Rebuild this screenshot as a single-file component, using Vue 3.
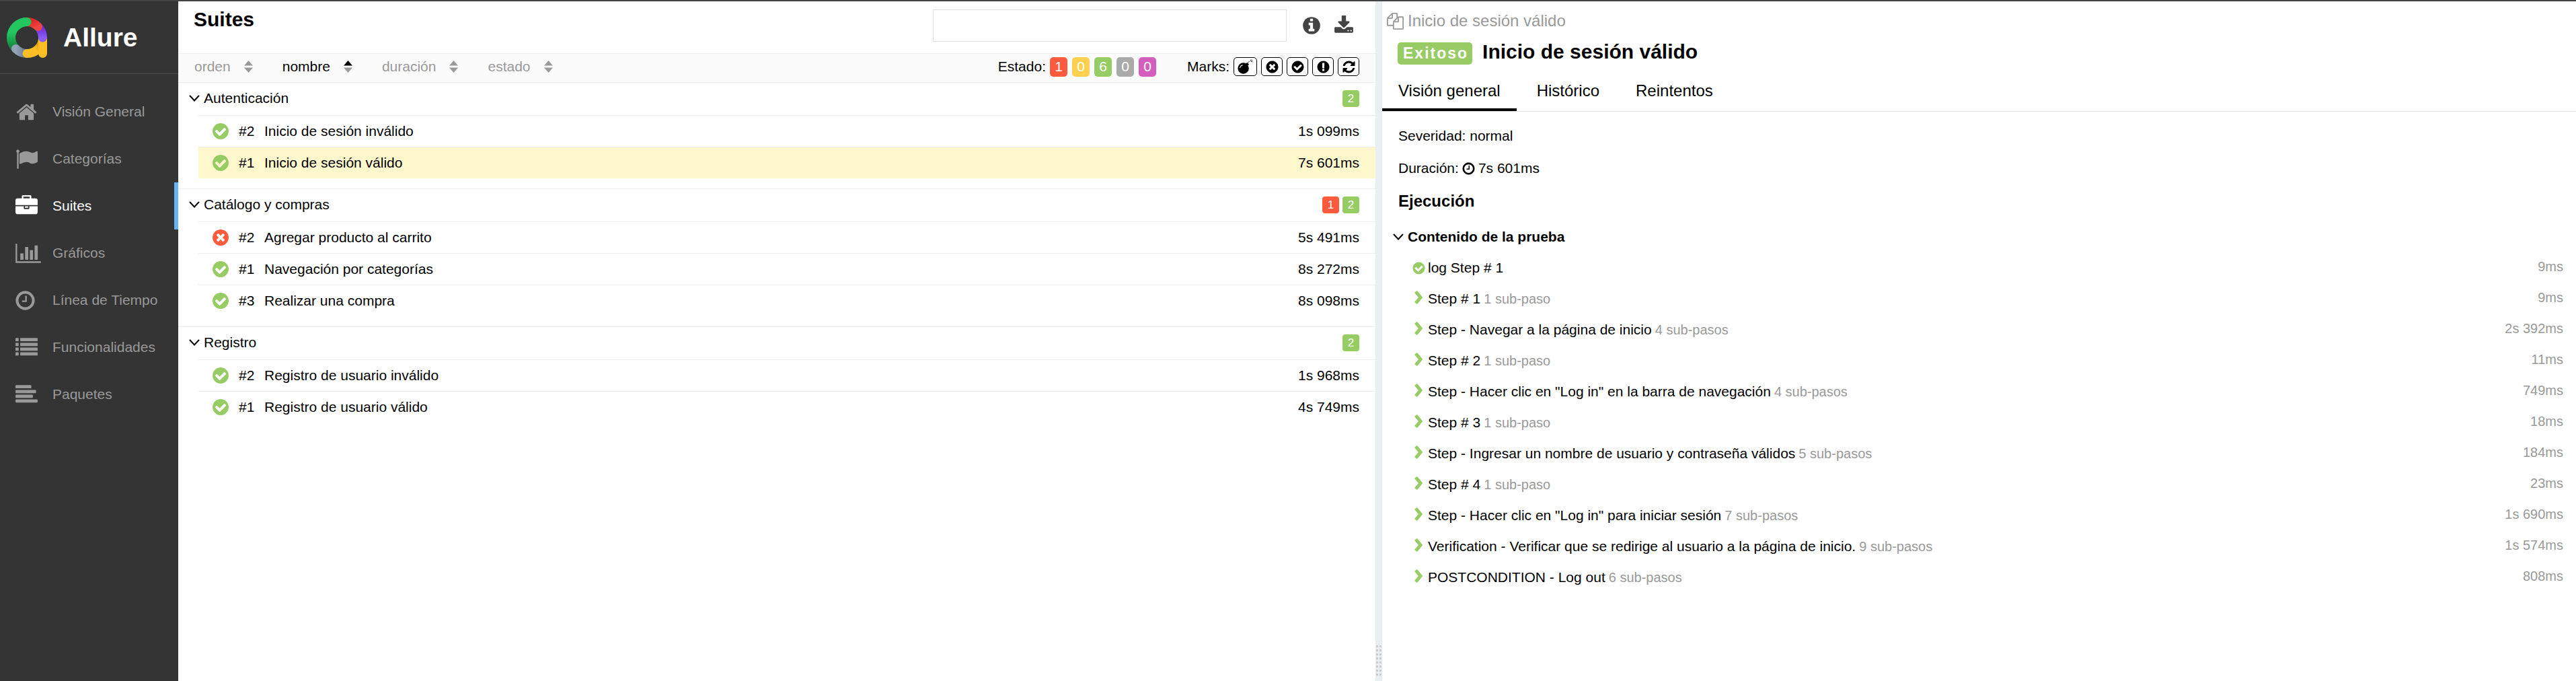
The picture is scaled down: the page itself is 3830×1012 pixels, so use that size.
<script setup>
import { h } from 'vue'

const disc = 'q0 209-103 385.5t-279.5 279.5-385.5 103-385.5-103-279.5-279.5-103-385.5 103-385.5 279.5-279.5 385.5-103 385.5 103 279.5 279.5 103 385.5z'
const glyphs = {
  home: 'M1472 992v480q0 26-19 45t-45 19h-384v-384h-256v384h-384q-26 0-45-19t-19-45v-480q0-1 .5-3t.5-3l575-474 575 474q1 2 1 6zm223-69l-62 74q-8 9-21 11h-3q-13 0-21-7l-692-577-692 577q-12 8-24 7-13-2-21-11l-62-74q-8-10-7-23.5t11-21.5l719-599q32-26 76-26t76 26l244 204v-195q0-14 9-23t23-9h192q14 0 23 9t9 23v408l219 182q10 8 11 21.5t-7 23.5z',
  flag: 'M320 256q0 72-64 110v1266q0 13-9.5 22.5t-22.5 9.5h-64q-13 0-22.5-9.5t-9.5-22.5v-1266q-64-38-64-110 0-53 37.5-90.5t90.5-37.5 90.5 37.5 37.5 90.5zm1472 64v763q0 25-12.5 38.5t-39.5 27.5q-215 116-369 116-61 0-123.5-22t-108.5-48-115.5-48-142.5-22q-192 0-464 146-17 9-33 9-26 0-45-19t-19-45v-742q0-32 31-55 21-14 79-43 236-120 421-120 107 0 200 29t219 88q38 19 88 19 54 0 117.5-21t110-47 88-47 54.5-21q26 0 45 19t19 45z',
  briefcase: 'M640 256h512v-128h-512v128zm1152 640v480q0 66-47 113t-113 47h-1472q-66 0-113-47t-47-113v-480h672v160q0 26 19 45t45 19h320q26 0 45-19t19-45v-160h672zm-768 0v128h-256v-128h256zm768-480v384h-1792v-384q0-66 47-113t113-47h352v-160q0-40 28-68t68-28h576q40 0 68 28t28 68v160h352q66 0 113 47t47 113z',
  chart: 'M640 896v512h-256v-512h256zm384-512v1024h-256v-1024h256zm1024 1152v128h-2048v-1536h128v1408h1920zm-640-896v768h-256v-768h256zm384-384v1152h-256v-1152h256z',
  clock: 'M1024 544v448q0 14-9 23t-23 9h-320q-14 0-23-9t-9-23v-64q0-14 9-23t23-9h224v-352q0-14 9-23t23-9h64q14 0 23 9t9 23zm416 352q0-148-73-273t-198-198-273-73-273 73-198 198-73 273 73 273 198 198 273 73 273-73 198-198 73-273zm224 0' + disc,
  list: 'M30 1280h196q30 0 30 30v196q0 30-30 30h-196q-30 0-30-30v-196q0-30 30-30zM30 896h196q30 0 30 30v196q0 30-30 30h-196q-30 0-30-30v-196q0-30 30-30zM30 512h196q30 0 30 30v196q0 30-30 30h-196q-30 0-30-30v-196q0-30 30-30zM30 128h196q30 0 30 30v196q0 30-30 30h-196q-30 0-30-30v-196q0-30 30-30zM414 1280h1348q30 0 30 30v196q0 30-30 30h-1348q-30 0-30-30v-196q0-30 30-30zM414 896h1348q30 0 30 30v196q0 30-30 30h-1348q-30 0-30-30v-196q0-30 30-30zM414 512h1348q30 0 30 30v196q0 30-30 30h-1348q-30 0-30-30v-196q0-30 30-30zM414 128h1348q30 0 30 30v196q0 30-30 30h-1348q-30 0-30-30v-196q0-30 30-30z',
  align: 'M64 128h1152q64 0 64 64v128q0 64-64 64h-1152q-64 0-64-64v-128q0-64 64-64zM64 512h1536q64 0 64 64v128q0 64-64 64h-1536q-64 0-64-64v-128q0-64 64-64zM64 896h1280q64 0 64 64v128q0 64-64 64h-1280q-64 0-64-64v-128q0-64 64-64zM64 1280h1664q64 0 64 64v128q0 64-64 64h-1664q-64 0-64-64v-128q0-64 64-64z',
  check: 'M1412 734q0-28-18-46l-91-90q-19-19-45-19t-45 19l-408 407-226-226q-19-19-45-19t-45 19l-91 90q-18 18-18 46 0 27 18 45l362 362q19 19 45 19 27 0 46-19l543-543q18-18 18-45zm252 162' + disc,
  times: 'M1277 1122q0-26-19-45l-181-181 181-181q19-19 19-45 0-27-19-46l-90-90q-19-18-46-18-26 0-45 18l-181 181-181-181q-19-18-45-18-27 0-46 18l-90 90q-19 19-19 46 0 26 19 45l181 181-181 181q-19 19-19 45 0 27 19 46l90 90q19 18 46 18 26 0 45-18l181-181 181 181q19 18 45 18 27 0 46-18l90-90q19-19 19-46zm387-226' + disc,
  warn: 'M896 128q209 0 385.5 103t279.5 279.5 103 385.5-103 385.5-279.5 279.5-385.5 103-385.5-103-279.5-279.5-103-385.5 103-385.5 279.5-279.5 385.5-103zm128 1247v-190q0-14-9-23.5t-22-9.5h-192q-13 0-23 10t-10 23v190q0 13 10 23t23 10h192q13 0 22-9.5t9-23.5zm-2-344l18-621q0-12-10-18-10-8-24-8h-220q-14 0-24 8-10 6-10 18l17 621q0 10 10 17.5t24 7.5h185q14 0 23.5-7.5t10.5-17.5z',
  info: 'M1152 1376v-160q0-14-9-23t-23-9h-96v-512q0-14-9-23t-23-9h-320q-14 0-23 9t-9 23v160q0 14 9 23t23 9h96v320h-96q-14 0-23 9t-9 23v160q0 14 9 23t23 9h448q14 0 23-9t9-23zm-128-896v-160q0-14-9-23t-23-9h-192q-14 0-23 9t-9 23v160q0 14 9 23t23 9h192q14 0 23-9t9-23zm640 416' + disc,
  refresh: 'M1639 1056q0 5-1 7-64 268-268 434.5t-478 166.5q-146 0-282.5-55t-243.5-157l-129 129q-19 19-45 19t-45-19-19-45v-448q0-26 19-45t45-19h448q26 0 45 19t19 45-19 45l-137 137q71 66 161 102t187 36q134 0 250-65t186-179q11-17 53-117 8-23 30-23h192q13 0 22.5 9.5t9.5 22.5zm25-800v448q0 26-19 45t-45 19h-448q-26 0-45-19t-19-45 19-45l138-138q-148-137-349-137-134 0-250 65t-186 179q-11 17-53 117-8 23-30 23h-199q-13 0-22.5-9.5t-9.5-22.5v-7q65-268 270-434.5t480-166.5q146 0 284 55.5t245 156.5l130-129q19-19 45-19t45 19 19 45z',
  download: 'M1344 1344q0-26-19-45t-45-19-45 19-19 45 19 45 45 19 45-19 19-45zm256 0q0-26-19-45t-45-19-45 19-19 45 19 45 45 19 45-19 19-45zm128-224v320q0 40-28 68t-68 28h-1472q-40 0-68-28t-28-68v-320q0-40 28-68t68-28h465l135 136q58 56 136 56t136-56l136-136h464q40 0 68 28t28 68zm-325-569q17 41-14 70l-448 448q-18 19-45 19t-45-19l-448-448q-31-29-14-70 17-39 59-39h256v-448q0-26 19-45t45-19h256q26 0 45 19t19 45v448h256q42 0 59 39z',
  copy: 'M1696 384q40 0 68 28t28 68v1216q0 40-28 68t-68 28h-960q-40 0-68-28t-28-68v-288h-544q-40 0-68-28t-28-68v-672q0-40 20-88t48-76l408-408q28-28 76-48t88-20h416q40 0 68 28t28 68v328q68-40 128-40h416zm-544 213l-299 299h299v-299zm-640-384l-299 299h299v-299zm196 647l316-316v-416h-384v416q0 40-28 68t-68 28h-416v640h512v-256q0-40 20-88t48-76zm956 804v-1152h-384v416q0 40-28 68t-68 28h-416v640h896z',
  bomb: 'M640 470a615 615 0 1 0 0 1230a615 615 0 1 0 0-1230zM230 1040q30-290 330-350q40 60-20 90q-200 50-240 260q-30 50-70 0zM940 540l220 220 110-120-210-200zM1170 500q60-130 190-160l-10-50q-160 40-220 170zM1400 150l90-30 20 60-90 30zM1530 130h110v60h-110zM1600 250h60v110h-60zM1470 300l50-30 50 90-50 30zM1440 230h60v50h-60z',
}

// Icon drawn at its natural proportions; `wide` glyphs use a 2048-unit box
const Icon = (p) =>
  h('svg', { viewBox: `0 0 ${p.wide ? 2048 : 1792} 1792`, width: p.wide ? Math.round((p.size * 8) / 7) : p.size, height: p.size, fill: 'currentColor', 'aria-hidden': 'true', style: { display: 'block', flex: 'none' } }, [h('path', { d: glyphs[p.name] })])
Icon.props = ['name', 'size', 'wide']

const nav = [
  { icon: 'home', label: 'Visión General' },
  { icon: 'flag', label: 'Categorías' },
  { icon: 'briefcase', label: 'Suites', active: true },
  { icon: 'chart', label: 'Gráficos', wide: true },
  { icon: 'clock', label: 'Línea de Tiempo', inset: true },
  { icon: 'list', label: 'Funcionalidades' },
  { icon: 'align', label: 'Paquetes' },
]
const sorters = [{ label: 'orden' }, { label: 'nombre', active: true }, { label: 'duración' }, { label: 'estado' }]
const statuses = [['failed', 1], ['broken', 0], ['passed', 6], ['skipped', 0], ['unknown', 0]]
const marks = [['bomb', 'Flaky'], ['times', 'New failed'], ['check', 'New passed'], ['warn', 'New broken'], ['refresh', 'Retries']]
const groups = [
  {
    name: 'Autenticación', counts: [['passed', 2]],
    tests: [
      { n: 2, name: 'Inicio de sesión inválido', time: '1s 099ms', status: 'passed' },
      { n: 1, name: 'Inicio de sesión válido', time: '7s 601ms', status: 'passed', active: true },
    ],
  },
  {
    name: 'Catálogo y compras', counts: [['failed', 1], ['passed', 2]],
    tests: [
      { n: 2, name: 'Agregar producto al carrito', time: '5s 491ms', status: 'failed' },
      { n: 1, name: 'Navegación por categorías', time: '8s 272ms', status: 'passed' },
      { n: 3, name: 'Realizar una compra', time: '8s 098ms', status: 'passed' },
    ],
  },
  {
    name: 'Registro', counts: [['passed', 2]],
    tests: [
      { n: 2, name: 'Registro de usuario inválido', time: '1s 968ms', status: 'passed' },
      { n: 1, name: 'Registro de usuario válido', time: '4s 749ms', status: 'passed' },
    ],
  },
]
const tabs = ['Visión general', 'Histórico', 'Reintentos']
const steps = [
  { name: 'log Step # 1', time: '9ms', leaf: true },
  { name: 'Step # 1', sub: '1 sub-paso', time: '9ms' },
  { name: 'Step - Navegar a la página de inicio', sub: '4 sub-pasos', time: '2s 392ms' },
  { name: 'Step # 2', sub: '1 sub-paso', time: '11ms' },
  { name: 'Step - Hacer clic en "Log in" en la barra de navegación', sub: '4 sub-pasos', time: '749ms' },
  { name: 'Step # 3', sub: '1 sub-paso', time: '18ms' },
  { name: 'Step - Ingresar un nombre de usuario y contraseña válidos', sub: '5 sub-pasos', time: '184ms' },
  { name: 'Step # 4', sub: '1 sub-paso', time: '23ms' },
  { name: 'Step - Hacer clic en "Log in" para iniciar sesión', sub: '7 sub-pasos', time: '1s 690ms' },
  { name: 'Verification - Verificar que se redirige al usuario a la página de inicio.', sub: '9 sub-pasos', time: '1s 574ms' },
  { name: 'POSTCONDITION - Log out', sub: '6 sub-pasos', time: '808ms' },
]
</script>

<template>
  <div class="app">
    <aside class="side">
      <a class="brand" href="#">
        <svg class="logo" viewBox="0 0 60 60" width="60" height="60" fill="none" stroke-width="13" stroke-linecap="round" aria-hidden="true">
          <defs>
            <linearGradient id="lg-green" x1="0" y1="0" x2="0" y2="1"><stop offset="0.4" stop-color="#22c55e" /><stop offset="1" stop-color="#15803d" /></linearGradient>
            <linearGradient id="lg-red" x1="0" y1="0" x2="1" y2="1"><stop offset="0" stop-color="#dc2626" /><stop offset="1" stop-color="#ef4444" /></linearGradient>
            <linearGradient id="lg-violet" x1="0" y1="0" x2="0" y2="1"><stop offset="0" stop-color="#6d28d9" /><stop offset="1" stop-color="#8b5cf6" /></linearGradient>
            <linearGradient id="lg-grey" x1="0" y1="0" x2="1" y2="0"><stop offset="0" stop-color="#94a3b8" /><stop offset="1" stop-color="#64748b" /></linearGradient>
            <linearGradient id="lg-amber" x1="0" y1="1" x2="1" y2="0"><stop offset="0.4" stop-color="#fbbf24" /><stop offset="1" stop-color="#d97706" /></linearGradient>
          </defs>
          <path d="M13.5 46.5A23.5 23.5 0 0 1 6.5 30A23.5 23.5 0 0 1 30 6.5" stroke="url(#lg-green)" />
          <path d="M13.5 46.5A23.5 23.5 0 0 0 30 53.5" stroke="url(#lg-grey)" />
          <path d="M53.5 32A23.5 23.5 0 0 1 30 53.5" stroke="url(#lg-amber)" />
          <path d="M53.5 32V53.5" stroke="#fbbf24" />
          <path d="M47 14A23.5 23.5 0 0 1 53.5 30" stroke="url(#lg-violet)" />
          <path d="M30 6.5A23.5 23.5 0 0 1 46.5 13.5" stroke="url(#lg-red)" />
          <path d="M14 13A23.5 23.5 0 0 1 30 6.5" stroke="#22c55e" />
        </svg>
        <span>Allure</span>
      </a>
      <nav class="nav">
        <a v-for="n in nav" :key="n.label" href="#" :class="{ active: n.active }">
          <span class="nav-icon" :class="{ inset: n.inset }"><Icon :name="n.icon" :size="33" :wide="n.wide" /></span>
          <span>{{ n.label }}</span>
        </a>
      </nav>
    </aside>

    <main class="tree">
      <header class="tree-head">
        <h1>Suites</h1>
        <div class="tools">
          <input type="search" aria-label="Buscar" />
          <button type="button" aria-label="Información"><Icon name="info" :size="30" /></button>
          <button type="button" aria-label="Descargar"><Icon name="download" :size="30" /></button>
        </div>
      </header>
      <div class="bar">
        <div class="sorters">
          <button v-for="s in sorters" :key="s.label" type="button" :class="{ active: s.active }">
            <span>{{ s.label }}</span>
            <svg viewBox="0 0 13 18" width="13" height="18" aria-hidden="true"><path class="up" d="M6.5 0L13 7.5H0z" /><path d="M6.5 18L0 10.5h13z" /></svg>
          </button>
        </div>
        <div class="filters">
          <span class="cap">Estado:</span>
          <div class="statuses">
            <button v-for="s in statuses" :key="s[0]" type="button" :class="s[0]">{{ s[1] }}</button>
          </div>
          <span class="cap marks-cap">Marks:</span>
          <div class="marks">
            <button v-for="m in marks" :key="m[0]" type="button" :aria-label="m[1]" :class="m[0]"><Icon :name="m[0]" :size="m[0] === 'bomb' ? 24 : 21" /></button>
          </div>
        </div>
      </div>
      <section v-for="g in groups" :key="g.name" class="group">
        <button class="group-head" type="button">
          <svg class="fold" viewBox="0 0 16 10" width="16" height="10" aria-hidden="true"><path d="M1 1l7 7.5 7-7.5" /></svg>
          <span>{{ g.name }}</span>
          <span class="counts"><span v-for="c in g.counts" :key="c[0]" :class="c[0]">{{ c[1] }}</span></span>
        </button>
        <a v-for="t in g.tests" :key="t.name" href="#" class="test" :class="{ active: t.active }">
          <span class="state" :class="t.status"><Icon :name="t.status === 'passed' ? 'check' : 'times'" :size="28" /></span>
          <span class="num">#{{ t.n }}</span>
          <span>{{ t.name }}</span>
          <span class="time">{{ t.time }}</span>
        </a>
      </section>
    </main>

    <div class="gutter">
      <svg viewBox="0 0 8 46" width="8" height="46" aria-hidden="true">
        <rect v-for="i in 16" :key="i" :x="(i % 2) * 5" :y="Math.floor((i - 1) / 2) * 6" width="3" height="3" />
      </svg>
    </div>

    <article class="detail">
      <div class="crumb"><Icon name="copy" :size="25" /><span>Inicio de sesión válido</span></div>
      <div class="title"><span class="label">Exitoso</span><h2>Inicio de sesión válido</h2></div>
      <nav class="tabs">
        <a v-for="(t, i) in tabs" :key="t" href="#" :class="{ active: i === 0 }">{{ t }}</a>
      </nav>
      <div class="facts">
        <p>Severidad: normal</p>
        <p>Duración: <Icon name="clock" :size="21" /> 7s 601ms</p>
      </div>
      <h3>Ejecución</h3>
      <h4>
        <svg class="fold" viewBox="0 0 16 10" width="16" height="10" aria-hidden="true"><path d="M1 1l7 7.5 7-7.5" /></svg>
        <span>Contenido de la prueba</span>
      </h4>
      <ul class="steps">
        <li v-for="s in steps" :key="s.name">
          <span class="step-icon">
            <Icon v-if="s.leaf" name="check" :size="21" />
            <svg v-else class="arrow" viewBox="0 0 13 20" width="13" height="20" aria-hidden="true"><path d="M2 1.5l7 8.5-7 8.5" /></svg>
          </span>
          <span>{{ s.name }}</span>
          <span v-if="s.sub" class="sub">{{ s.sub }}</span>
          <span class="dur">{{ s.time }}</span>
        </li>
      </ul>
    </article>
  </div>
</template>

<style>
body {
  margin: 0;
  background: #fff;
}
</style>

<style scoped>
.app {
  display: grid;
  grid-template-columns: 265px minmax(0, 356fr) 10px minmax(0, 355fr);
  min-height: 100vh;
  box-sizing: border-box;
  border-top: 2px solid #444;
  font-family: "Liberation Sans", Arial, sans-serif;
  font-size: 21px;
  line-height: 28px;
  color: #000;
  white-space: nowrap;
}
a {
  color: inherit;
  text-decoration: none;
}
button {
  margin: 0;
  padding: 0;
  border: 0;
  background: none;
  font: inherit;
  color: inherit;
  cursor: pointer;
}
h1, h2, h3, h4, p, ul {
  margin: 0;
  padding: 0;
}

.side {
  background: #343434;
  color: #999;
}
.brand {
  display: flex;
  align-items: center;
  gap: 24px;
  height: 107px;
  padding: 0 10px;
  border-bottom: 1px solid #4d4d4d;
  font-size: 39px;
  font-weight: bold;
  color: #fff;
}
.logo {
  flex: none;
}
.nav {
  padding-top: 21px;
}
.nav a {
  display: flex;
  align-items: center;
  height: 70px;
  padding-left: 23px;
}
.nav a.active {
  color: #fff;
  border-right: 6px solid #64b5f6;
}
.nav-icon {
  width: 55px;
}
.nav-icon.inset {
  width: 57px;
  margin-left: -2px;
}

.tree-head {
  display: flex;
  justify-content: space-between;
  height: 77px;
  padding: 0 32px 0 23px;
}
h1 {
  font-size: 30px;
  line-height: 54px;
}
.tools {
  display: flex;
  align-items: center;
  gap: 18px;
  padding-bottom: 6px;
}
.tools button {
  color: #444;
}
.tools input {
  box-sizing: border-box;
  width: 526px;
  height: 48px;
  margin: 0 4px 0 0;
  padding: 0 12px;
  border: 1px solid #e0e0e0;
  font: inherit;
  outline: 0;
}
.bar {
  display: flex;
  justify-content: space-between;
  align-items: center;
  box-sizing: border-box;
  height: 43px;
  padding: 0 24px 4px;
  background: #fbfbfb;
  border-top: 1px solid #eceff1;
}
.sorters {
  display: flex;
  gap: 44px;
}
.sorters button {
  display: flex;
  align-items: center;
  gap: 20px;
  color: #999;
}
.sorters svg {
  fill: #999;
}
.sorters .active {
  color: #000;
}
.sorters .active .up {
  fill: #000;
}
.filters, .statuses, .marks {
  display: flex;
  align-items: center;
}
.cap {
  margin-right: 6px;
}
.marks-cap {
  margin-left: 46px;
}
.statuses {
  gap: 7px;
}
.statuses button {
  width: 26px;
  height: 29px;
  border-radius: 5px;
  color: #fff;
}
.marks {
  gap: 6px;
}
.marks button {
  display: flex;
  align-items: center;
  justify-content: center;
  box-sizing: border-box;
  width: 32px;
  height: 28px;
  border: 1px solid #000;
  border-radius: 5px;
  background: #fff;
}
.marks .bomb {
  width: 35px;
}
.statuses .failed, .counts .failed { background: #fd5a3e; }
.statuses .broken { background: #ffd050; }
.statuses .passed, .counts .passed { background: #97cc64; }
.statuses .skipped { background: #aaa; }
.statuses .unknown { background: #d35ebe; }

.group {
  padding-bottom: 15px;
  border-top: 1px solid #eceff1;
}
.group:last-child {
  padding-bottom: 0;
}
.group-head {
  display: flex;
  align-items: center;
  width: 100%;
  height: 48px;
  padding: 0 24px 2px 16px;
}
.fold {
  flex: none;
  margin-right: 6px;
  fill: none;
  stroke: #000;
  stroke-width: 2;
}
.counts {
  display: flex;
  gap: 5px;
  margin-left: auto;
  font-size: 17px;
  line-height: 25px;
  text-align: center;
  color: #fff;
}
.counts span {
  width: 25px;
  border-radius: 4px;
}
.test {
  display: flex;
  align-items: center;
  height: 46px;
  margin-left: 30px;
  padding: 0 24px 0 19px;
  border-top: 1px solid #eceff1;
}
.test.active {
  background: #fff8cd;
}
.state {
  margin-right: 13px;
}
.passed {
  color: #97cc64;
}
.failed {
  color: #fd5a3e;
}
.num {
  width: 38px;
}
.time {
  margin-left: auto;
}
.counts .passed, .counts .failed, .statuses .passed, .statuses .failed {
  color: #fff;
}

.gutter {
  display: flex;
  align-items: flex-end;
  justify-content: center;
  padding-bottom: 7px;
  background: #e9eef1;
}
.gutter svg {
  fill: #ccc;
}

.crumb {
  display: flex;
  align-items: center;
  gap: 6px;
  padding: 15px 7px 0;
  font-size: 24px;
  color: #999;
}
.title {
  display: flex;
  align-items: baseline;
  gap: 15px;
  height: 36px;
  padding: 15px 23px 0;
}
.label {
  padding: 0 6px 0 8px;
  border-radius: 5px;
  background: #97cc64;
  font-size: 23px;
  font-weight: bold;
  line-height: 33px;
  letter-spacing: 2px;
  color: #fff;
}
h2 {
  font-size: 30px;
  line-height: 34px;
}
.tabs {
  display: flex;
  gap: 6px;
  padding-top: 10px;
  border-bottom: 1px solid #e0e0e0;
  font-size: 24px;
}
.tabs a {
  padding: 15px 24px 16px;
}
.tabs a.active {
  padding-bottom: 12px;
  border-bottom: 4px solid #000;
}
.facts {
  padding: 12px 24px 0;
}
.facts p {
  display: flex;
  align-items: center;
  gap: 4px;
  line-height: 48px;
}
h3 {
  padding: 5px 24px 0;
  font-size: 24px;
  line-height: 40px;
}
h4 {
  display: flex;
  align-items: center;
  padding: 10px 16px 0;
  font-size: 21px;
  line-height: 46px;
}
.steps {
  list-style: none;
}
.steps li {
  display: flex;
  align-items: center;
  height: 46px;
  padding: 0 19px 0 44px;
}
.step-icon {
  width: 24px;
  color: #97cc64;
}
.arrow {
  display: block;
  margin: 0 0 4px 4px;
  fill: none;
  stroke: currentColor;
  stroke-width: 5;
}
.sub {
  margin-left: 5px;
  font-size: 20px;
  color: #999;
}
.dur {
  margin-left: auto;
  padding-bottom: 4px;
  font-size: 20px;
  color: #999;
}
</style>
